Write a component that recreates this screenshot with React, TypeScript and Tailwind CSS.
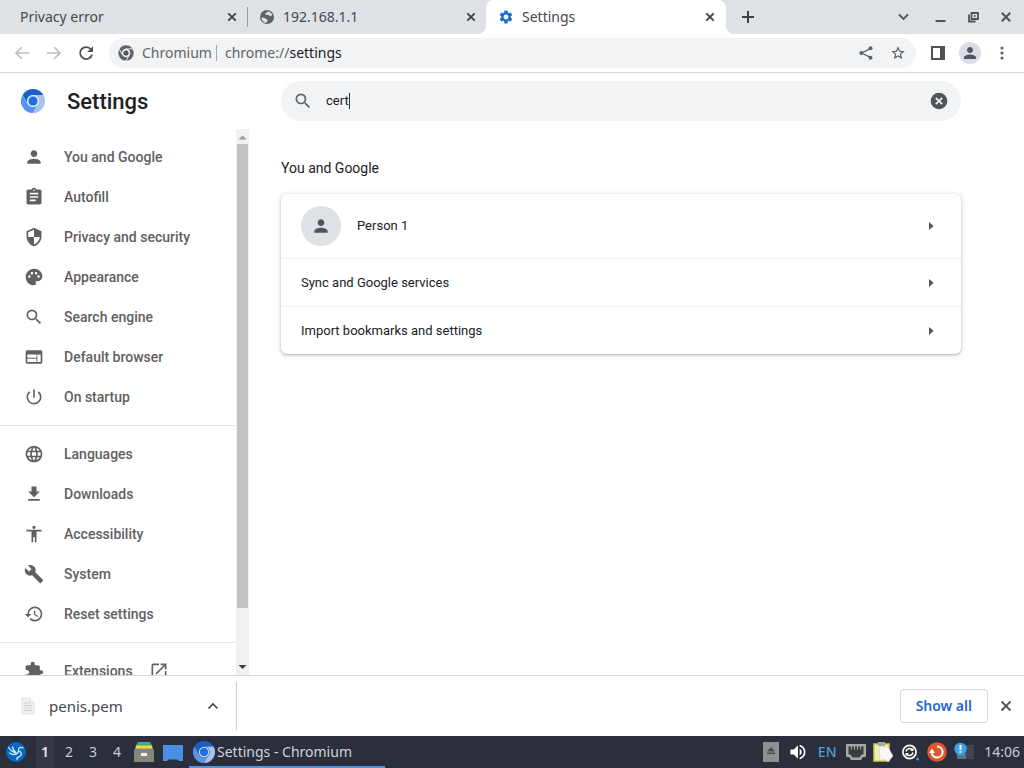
import React from "react";
import type { IconType } from "react-icons";
import {
  MdAccessibility,
  MdAssignment,
  MdBuild,
  MdExtension,
  MdFileDownload,
  MdHistory,
  MdLanguage,
  MdOpenInNew,
  MdPalette,
  MdPerson,
  MdPowerSettingsNew,
  MdSearch,
  MdSecurity,
  MdSettings,
  MdStarBorder,
  MdVolumeUp,
  MdWeb,
} from "react-icons/md";

function ChromiumLogo({ className }: { className: string }) {
  return (
    <svg viewBox="0 0 24 24" className={className} aria-hidden="true">
      <path fill="#1c5fc9" d="M1.6 6A12 12 0 0 1 22.4 6H12a6 6 0 0 0-5.2 9z" />
      <path fill="#5a93ee" d="M1.6 6l5.2 9a6 6 0 0 0 10.4 0L12 24A12 12 0 0 1 1.6 6z" />
      <path fill="#a4c3f5" d="M22.4 6H12a6 6 0 0 1 5.2 9L12 24A12 12 0 0 0 22.4 6z" />
      <circle cx="12" cy="12" r="5.7" fill="#d5e4fb" />
      <circle cx="12" cy="12" r="4.6" fill="#1f6fe4" />
    </svg>
  );
}

function ChromeMono({ className }: { className: string }) {
  return (
    <svg viewBox="0 0 24 24" className={className} aria-hidden="true">
      <g fill="#5f6368" stroke="#f1f3f4" strokeWidth="1">
        <path d="M1.600 6A12 12 0 0 1 22.400 6H12a6 6 0 0 0-5.200 9z" />
        <path d="M1.600 6l5.200 9a6 6 0 0 0 10.400 0L12 24A12 12 0 0 1 1.600 6z" />
        <path d="M22.400 6H12a6 6 0 0 1 5.200 9L12 24A12 12 0 0 0 22.400 6z" />
      </g>
      <circle cx="12" cy="12" r="5.400" fill="#f1f3f4" />
      <circle cx="12" cy="12" r="3.900" fill="#505357" />
    </svg>
  );
}

function Globe({ className }: { className: string }) {
  return (
    <svg viewBox="0 0 16 16" className={className} aria-hidden="true">
      <circle cx="8" cy="8" r="7" fill="#5f6368" />
      <path d="M2.600 8.500c1.500-.3 3 .2 4.200 1.200 1 .8 2 .8 1.800 2-.2 1-1.200 1.200-1.400 2.300C4.500 13.600 2.500 11.500 2.600 8.500z" fill="#dee1e6" />
      <path d="M8.500 2.500c2.200 0 4 1.300 4.800 3.200-.8.6-1.200 1.700-2.300 1.500-1-.2-.8-1.300-2-1.400-1.200 0-1.800.4-2.500-.4-.5-1 .8-1.400 1.200-1.700.4-.3.300-.8.800-1.200z" fill="#dee1e6" />
    </svg>
  );
}

function Stroke({ d, className, width = 1.8 }: { d: string; className: string; width?: number }) {
  return (
    <svg viewBox="0 0 16 16" className={className} fill="none" stroke="currentColor" strokeWidth={width} aria-hidden="true">
      <path d={d} />
    </svg>
  );
}

function TabClose({ label }: { label: string }) {
  return (
    <button aria-label={label} className="flex size-4 shrink-0 items-center justify-center text-[#3c4043]">
      <Stroke d="M4.300 4.300l7.400 7.400M11.700 4.300l-7.400 7.400" className="size-4" />
    </button>
  );
}

function TabStrip() {
  return (
    <div className="flex h-[34px] shrink-0 bg-white text-sm text-[#45484c]">
      <div className="flex w-[486px] min-w-0 items-center rounded-br-lg bg-[#dee1e6]">
        <div className="flex w-[247px] items-center pr-[7px] pl-5">
          <span className="flex-1 truncate">Privacy error</span>
          <TabClose label="Close Privacy error" />
        </div>
        <div className="h-5 w-px bg-[#9a9ea4]" />
        <div className="flex flex-1 items-center pr-[7px] pl-[11px]">
          <Globe className="mr-2 size-4" />
          <span className="flex-1 truncate">192.168.1.1</span>
          <TabClose label="Close 192.168.1.1" />
        </div>
      </div>
      <div className="w-60 bg-[#dee1e6]">
        <div className="flex h-full items-center rounded-t-lg bg-white pr-2 pl-3">
          <MdSettings className="mr-2 size-4 text-[#1a6dd6]" />
          <span className="flex-1 truncate">Settings</span>
          <TabClose label="Close Settings" />
        </div>
      </div>
      <div className="flex flex-1 items-center rounded-bl-lg bg-[#dee1e6] pr-2.5 pl-3.5 text-[#3c4043]">
        <button aria-label="New tab">
          <Stroke d="M8 2v12M2 8h12" className="size-4" width={2} />
        </button>
        <div className="flex-1" />
        <div className="flex gap-[18px] text-[#505357]">
          <button aria-label="Search tabs">
            <Stroke d="M3 5.500l4.500 4.500L12 5.500" className="size-4" />
          </button>
          <button aria-label="Minimize">
            <Stroke d="M5.500 12h10" className="size-4" width={2} />
          </button>
          <button aria-label="Restore">
            <Stroke d="M7.500 4H14v6H7.500zM5 5.500v7h6.500M10 7h1.500" className="size-4" width={1.8} />
          </button>
          <button aria-label="Close window">
            <Stroke d="M3.800 3.800l8.400 8.400M12.200 3.800l-8.400 8.400" className="size-4" width={2} />
          </button>
        </div>
      </div>
    </div>
  );
}

function Toolbar() {
  return (
    <div className="flex h-[39px] shrink-0 items-center border-b border-[#d5d7da] bg-white pr-3.5 pl-3.5 text-[#5f6368]">
      <button aria-label="Back" className="text-[#bcbec0]">
        <Stroke d="M15 8H2M8 2L2 8l6 6" className="size-4" width={1.7} />
      </button>
      <button aria-label="Forward" className="ml-4 text-[#bcbec0]">
        <Stroke d="M1 8h13M8 2l6 6-6 6" className="size-4" width={1.7} />
      </button>
      <button aria-label="Reload" className="ml-4 text-[#505357]">
        <svg viewBox="0 0 16 16" className="size-4" aria-hidden="true">
          <path d="M13 4.500A6 6 0 1 0 14 9.500" fill="none" stroke="currentColor" strokeWidth="1.800" />
          <path d="M15 1.200v5.800H9.200z" fill="currentColor" />
        </svg>
      </button>
      <div className="ml-[15px] flex h-[30px] flex-1 items-center rounded-full bg-[#f1f3f4] pr-2.5 pl-[9px]">
        <ChromeMono className="mr-2 size-4" />
        <span className="text-sm">Chromium</span>
        <div className="mr-2 ml-1 h-4 w-px bg-[#a5a8ac]" />
        <span className="flex-1 truncate text-sm">
          chrome://<span className="text-[#202124]">settings</span>
        </span>
        <button aria-label="Share" className="mr-4">
          <svg viewBox="0 0 16 16" className="size-4" aria-hidden="true">
            <path d="M13 3.300L3.500 8l9.500 4.700" fill="none" stroke="currentColor" strokeWidth="1.300" />
            <circle cx="12.500" cy="3.300" r="2" fill="currentColor" />
            <circle cx="3.300" cy="8" r="2" fill="currentColor" />
            <circle cx="12.500" cy="12.700" r="2" fill="currentColor" />
          </svg>
        </button>
        <button aria-label="Bookmark">
          <MdStarBorder className="size-4 text-[#505357]" />
        </button>
      </div>
      <button aria-label="Side panel" className="ml-3.5 text-[#505357]">
        <svg viewBox="0 0 16 16" className="size-4" fill="currentColor" aria-hidden="true">
          <path fillRule="evenodd" d="M1 1h14v14H1zM3 3v10h7V3z" />
        </svg>
      </button>
      <button aria-label="Profile" className="ml-[13px] flex size-[22px] items-center justify-center rounded-full bg-[#dadde3] text-[#50555e]">
        <MdPerson className="size-[18px]" />
      </button>
      <button aria-label="Menu" className="ml-[13px] flex w-4 justify-center">
        <svg viewBox="0 0 16 16" className="size-4" fill="currentColor" aria-hidden="true">
          <circle cx="8" cy="3" r="1.600" />
          <circle cx="8" cy="8" r="1.600" />
          <circle cx="8" cy="13" r="1.600" />
        </svg>
      </button>
    </div>
  );
}

const NAV_GROUPS: { label: string; Icon: IconType }[][] = [
  [
    { label: "You and Google", Icon: MdPerson },
    { label: "Autofill", Icon: MdAssignment },
    { label: "Privacy and security", Icon: MdSecurity },
    { label: "Appearance", Icon: MdPalette },
    { label: "Search engine", Icon: MdSearch },
    { label: "Default browser", Icon: MdWeb },
    { label: "On startup", Icon: MdPowerSettingsNew },
  ],
  [
    { label: "Languages", Icon: MdLanguage },
    { label: "Downloads", Icon: MdFileDownload },
    { label: "Accessibility", Icon: MdAccessibility },
    { label: "System", Icon: MdBuild },
    { label: "Reset settings", Icon: MdHistory },
  ],
  [{ label: "Extensions", Icon: MdExtension }],
];

function Sidebar() {
  return (
    <aside className="flex w-[250px] shrink-0 flex-col">
      <div className="flex h-14 shrink-0 items-center pl-[21px]">
        <ChromiumLogo className="size-6" />
        <h1 className="ml-[22px] text-[22px] font-medium text-[#202124]">Settings</h1>
      </div>
      <div className="flex min-h-0 flex-1">
        <nav className="w-[236px] overflow-hidden pt-2">
          {NAV_GROUPS.map((group, i) => (
            <div key={i} className={i > 0 ? "mt-2 border-t border-[#e4e4e4] pt-2" : ""}>
              {group.map(({ label, Icon }) => (
                <a key={label} href="#" className="flex h-10 items-center pl-6 text-sm font-medium text-[#5f6062]">
                  <Icon className="mr-5 size-5" />
                  {label}
                  {label === "Extensions" && <MdOpenInNew className="ml-4 size-5" />}
                </a>
              ))}
            </div>
          ))}
        </nav>
        <div className="flex w-[13px] flex-col items-center bg-[#f1f1f1]" aria-hidden="true">
          <svg viewBox="0 0 13 15" className="h-[15px] w-[13px]">
            <path d="M2.500 10.500h8l-4-4z" fill="#9a9a9a" />
          </svg>
          <div className="w-[11px] grow-[90] bg-[#c1c1c1]" />
          <div className="grow-[10]" />
          <svg viewBox="0 0 13 15" className="h-[15px] w-[13px]">
            <path d="M2.500 5h8l-4 4z" fill="#404040" />
          </svg>
        </div>
      </div>
    </aside>
  );
}

function Caret() {
  return (
    <svg viewBox="0 0 16 16" className="size-4 text-[#505357]" fill="currentColor" aria-hidden="true">
      <path d="M6 4l4.500 4L6 12z" />
    </svg>
  );
}

function SettingsPage() {
  return (
    <div className="flex min-h-0 flex-1 bg-white font-[Roboto,sans-serif]">
      <Sidebar />
      <main className="min-w-0 flex-1 pr-8 pl-[31px]">
        <div className="flex h-14 items-center">
          <label className="flex h-10 w-full max-w-[680px] items-center rounded-full bg-[#f1f3f4] px-3 text-[#5f6368]">
            <MdSearch className="mr-[13px] size-5" />
            <input
              aria-label="Search settings"
              defaultValue="cert"
              className="bg-transparent text-[13px] text-[#202124] outline-none [field-sizing:content]"
            />
            <span className="h-4 w-px bg-[#26345e]" />
            <span className="flex-1" />
            <button aria-label="Clear search" className="text-[#505357]">
              <svg viewBox="0 0 20 20" className="size-5" aria-hidden="true">
                <circle cx="10" cy="10" r="8.300" fill="currentColor" />
                <path d="M6.800 6.800l6.400 6.400M13.200 6.800l-6.400 6.400" stroke="#f1f3f4" strokeWidth="1.800" />
              </svg>
            </button>
          </label>
        </div>
        <section className="mt-7 max-w-[680px]">
          <h2 className="text-sm leading-[22px] text-[#202124]">You and Google</h2>
          <div className="mt-[15px] rounded-md bg-white text-[13px] text-[#202124] shadow-[0_1px_2px_rgba(60,64,67,0.3),0_1px_4px_1px_rgba(60,64,67,0.15)]">
            <button className="flex h-16 w-full items-center pr-[22px] pl-5">
              <span className="mr-4 flex size-10 items-center justify-center rounded-full bg-[#dee1e6] text-[#50555e]">
                <MdPerson className="size-5" />
              </span>
              <span className="flex-1 text-left">Person 1</span>
              <Caret />
            </button>
            {["Sync and Google services", "Import bookmarks and settings"].map((label) => (
              <button key={label} className="flex h-12 w-full items-center border-t border-[#f0f0f0] pr-[22px] pl-5">
                <span className="flex-1 text-left">{label}</span>
                <Caret />
              </button>
            ))}
          </div>
        </section>
      </main>
    </div>
  );
}

function DownloadShelf() {
  return (
    <div className="flex h-[61px] shrink-0 items-center border-t border-[#d5d7da] bg-white pr-2.5 text-[#45484c]">
      <div className="flex h-12 w-[237px] items-center border-r border-[#c9cbce] pr-[15px] pl-5">
        <svg viewBox="0 0 16 18" className="mr-[13px] h-[18px] w-4" aria-hidden="true">
          <path d="M2 1h8l4 4v12H2z" fill="#f0f0f0" stroke="#e2e2e2" />
          <path d="M4 6h6M4 8.500h8M4 11h8M4 13.500h8" stroke="#d2d2d2" />
          <path d="M10 1v4h4" fill="#fff" stroke="#dadada" />
        </svg>
        <span className="flex-1 truncate text-[15px]">penis.pem</span>
        <button aria-label="Download options">
          <Stroke d="M3.500 10.500L8 6l4.500 4.500" className="size-4" width={1.7} />
        </button>
      </div>
      <div className="flex-1" />
      <button className="h-[34px] rounded border border-[#d5d7da] px-[15px] text-sm font-semibold text-[#2468d2]">Show all</button>
      <button aria-label="Close downloads bar" className="ml-2.5 text-[#505357]">
        <Stroke d="M3.500 3.500l9 9M12.500 3.500l-9 9" className="size-4" />
      </button>
    </div>
  );
}

function Taskbar() {
  return (
    <footer className="flex h-8 shrink-0 items-center bg-[#2b2e3b] pr-1 pl-1.5 text-sm text-[#c9ccd4]">
      <button aria-label="Application menu">
        <svg viewBox="0 0 20 20" className="size-5" aria-hidden="true">
          <circle cx="10" cy="10" r="10" fill="#0766c4" />
          <path
            d="M2.500 5.500C4 8 6 9.500 9 10.800M6.500 5c.5 2.500 1.500 4.300 3.500 5.600M3.500 11c2.500 1.500 6 2 8 .3C13.500 9.500 11.500 7 13.500 5.700c1-.6 2-.5 3.500.3M13.500 9.500c2.500.5 2.500 4.300-.5 5.300-2 .6-2.500 1.400-1.700 2.700"
            fill="none"
            stroke="#d6edfc"
            strokeWidth="1.300"
            strokeLinecap="round"
          />
        </svg>
      </button>
      <div className="ml-[7px] flex">
        {["1", "2", "3", "4"].map((n) => (
          <button
            key={n}
            className={
              n === "1"
                ? "h-8 w-6 border-x-[3px] border-[#2b2e3b] bg-[#343745] font-semibold text-[#e3e5ea]"
                : "h-8 w-6"
            }
          >
            {n}
          </button>
        ))}
      </div>
      <button aria-label="File manager" className="ml-[5px]">
        <svg viewBox="0 0 20 20" className="size-5" aria-hidden="true">
          <path d="M4 0h12l1 2H3z" fill="#4c9bd8" />
          <path d="M3 1.500h14l1 2.500H2z" fill="#4caa5c" />
          <path d="M2 3.500h16l1 4H1z" fill="#f2d64b" />
          <path d="M1 6.500h18l1 2V20H0V8.500z" fill="#85877e" />
          <path d="M7 11h6v3H7z" fill="#f4f4f2" />
        </svg>
      </button>
      <button aria-label="Show desktop" className="ml-[9px]">
        <svg viewBox="0 0 20 20" className="size-5" aria-hidden="true">
          <path d="M0 3h20v16h-4l-1.500-1.500h-9L4 19H0z" fill="#4a90e2" />
        </svg>
      </button>
      <button className="ml-1.5 flex h-8 w-[196px] items-center border-b-2 border-[#5294e2] pt-0.5 pl-1 text-[#d0d3da]">
        <ChromiumLogo className="mr-0.5 size-[22px]" />
        Settings - Chromium
      </button>
      <div className="flex-1" />
      <div className="flex items-center gap-[7px]">
        <svg viewBox="0 0 20 20" className="size-5" aria-hidden="true">
          <path d="M2 0h16v20H2z" fill="#8d8f91" />
          <path d="M10 5l4 4.500H6zM6 10.500h8v1.500H6z" fill="#4a4c4f" />
        </svg>
        <MdVolumeUp className="size-5 text-white" />
        <span className="w-6 text-center font-medium text-[#4b9fd8]">EN</span>
        <svg viewBox="0 0 20 20" className="size-5" aria-hidden="true">
          <path d="M1 2h18a1 1 0 0 1 1 1v11a1 1 0 0 1-1 1h-2l-2 3H5l-2-3H1a1 1 0 0 1-1-1V3a1 1 0 0 1 1-1z" fill="#a6a7a8" />
          <path d="M2.500 4.500h15v8h-2l-2 3h-7l-2-3h-2z" fill="#3b3c3e" />
          <path d="M5.500 4.500v3M8.500 4.500v3M11.500 4.500v3M14.500 4.500v3" stroke="#a6a7a8" />
        </svg>
        <svg viewBox="0 0 20 20" className="size-5" aria-hidden="true">
          <path d="M1 2h15v17H1z" fill="#f0efb8" stroke="#cfd046" strokeWidth="1.500" />
          <path d="M5 0h7v4H5z" fill="#a9ab9c" />
          <path d="M6 5h9l5 9-5 6-3-3-5 1z" fill="#f7f7f7" stroke="#d0d0d0" strokeWidth=".6" />
        </svg>
        <svg viewBox="0 0 20 20" className="size-5" aria-hidden="true">
          <circle cx="9.500" cy="10" r="6.600" fill="none" stroke="#fff" strokeWidth="1.700" />
          <path d="M6 9.500A3.600 3.600 0 0 1 12 7.500M13 10.500a3.600 3.600 0 0 1-6 2" fill="none" stroke="#fff" strokeWidth="1.500" />
          <path d="M13.500 5.500V9H10zM5.500 14.500V11H9z" fill="#fff" />
          <circle cx="17.500" cy="17" r="1.500" fill="#3f8be0" />
        </svg>
        <svg viewBox="0 0 20 20" className="size-5" aria-hidden="true">
          <circle cx="10" cy="10" r="9.800" fill="#e2562b" />
          <path d="M10 4.500a5.500 5.500 0 1 1-5.300 6.500" fill="none" stroke="#fff" strokeWidth="2" />
          <path d="M2 11l3-4.500L8 11z" fill="#fff" />
        </svg>
        <svg viewBox="0 0 20 20" className="size-5" aria-hidden="true">
          <path d="M3 3h17v14H3z" fill="#414553" />
          <path d="M3 12h9v5H3z" fill="#5c7488" />
          <circle cx="6.500" cy="7" r="6.200" fill="#3ea3e6" />
          <path d="M5.500 3h2v5h-2zM5.500 9.200h2v1.600h-2z" fill="#fff" />
        </svg>
        <time className="ml-[3px]">14:06</time>
      </div>
    </footer>
  );
}

export default function App() {
  return (
    <div className="flex h-screen flex-col overflow-hidden bg-white font-['Noto_Sans',sans-serif]">
      <TabStrip />
      <Toolbar />
      <SettingsPage />
      <DownloadShelf />
      <Taskbar />
    </div>
  );
}
